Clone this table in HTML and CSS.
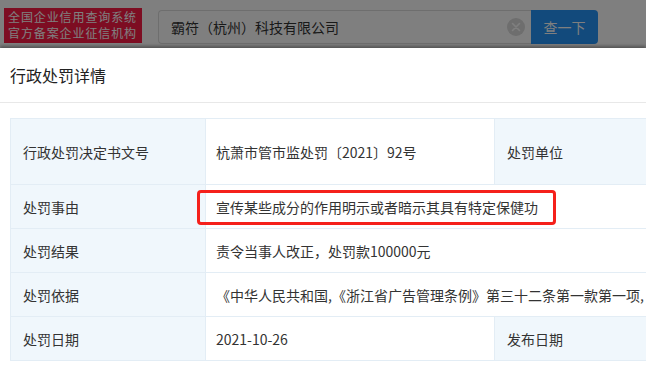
FILE: index.html
```html
<!DOCTYPE html>
<html lang="zh-CN">

<head>
    <meta charset="utf-8">
    <title>行政处罚详情</title>
    <link rel="stylesheet" href="styles.css">
</head>

<body>
    <div class="topbar">
        <div class="brand">
            <span>全国企业信用查询系统</span>
            <span>官方备案企业征信机构</span>
        </div>
        <div class="search">
            <div class="search-input">
                <span class="search-text">霸符（杭州）科技有限公司</span>
                <svg class="clear-icon" width="18" height="18" viewBox="0 0 18 18">
                    <circle cx="9" cy="9" r="9" fill="#dcdcdc"></circle>
                    <path d="M5.5 5.5 L12.5 12.5 M12.5 5.5 L5.5 12.5" stroke="#ffffff" stroke-width="1.6"
                        stroke-linecap="round"></path>
                </svg>
            </div>
            <button class="search-button">查一下</button>
        </div>
    </div>

    <div class="mask"></div>

    <div class="modal">
        <div class="modal-title">行政处罚详情</div>
        <div class="modal-body">
            <table class="detail">
                <colgroup>
                    <col class="col-label">
                    <col class="col-value">
                    <col class="col-label2">
                    <col class="col-value2">
                </colgroup>
                <tr>
                    <td class="label">行政处罚决定书文号</td>
                    <td>杭萧市管市监处罚〔2021〕92号</td>
                    <td class="label">处罚单位</td>
                    <td>杭州市萧山区市场监督管理局</td>
                </tr>
                <tr>
                    <td class="label">处罚事由</td>
                    <td colspan="3"><span class="mark">宣传某些成分的作用明示或者暗示其具有特定保健功</span></td>
                </tr>
                <tr>
                    <td class="label">处罚结果</td>
                    <td colspan="3">责令当事人改正，处罚款100000元</td>
                </tr>
                <tr>
                    <td class="label">处罚依据</td>
                    <td colspan="3" class="nowrap">《中华人民共和国,《浙江省广告管理条例》第三十二条第一款第一项, 《中华人民共和国广告法》第五十八条第一款第二项</td>
                </tr>
                <tr>
                    <td class="label">处罚日期</td>
                    <td>2021-10-26</td>
                    <td class="label">发布日期</td>
                    <td>2021-11-02</td>
                </tr>
            </table>
        </div>
    </div>
</body>

</html>
```

FILE: styles.css
```css
html,
body {
    margin: 0;
    height: 100%;
    overflow: hidden;
}

body {
    position: relative;
    font-family: "Noto Sans CJK SC", "Microsoft YaHei", sans-serif;
    color: #333333;
    background-color: #ffffff;
}

/* site header under the mask */
.topbar {
    height: 47px;
    display: flex;
    align-items: flex-start;
    gap: 16px;
    padding: 8px 0 0 4px;
    box-sizing: border-box;
    background-color: #ffffff;
}

.brand {
    width: 138px;
    height: 35px;
    box-sizing: border-box;
    padding: 1px 0 0 4px;
    display: flex;
    flex-direction: column;
    background-color: #fb1a45;
    color: #ffffff;
    font-size: 12px;
    line-height: 16px;
    letter-spacing: 0.9px;
    white-space: nowrap;
}

.search {
    display: flex;
    margin-top: 2px;
}

.search-input {
    width: 373px;
    height: 34px;
    box-sizing: border-box;
    display: flex;
    align-items: center;
    justify-content: space-between;
    padding: 0 6px 0 12px;
    border: 1px solid #dddddd;
    border-right: none;
    border-radius: 4px 0 0 4px;
    font-size: 14px;
    color: #333333;
}

.search-text {
    line-height: 20px;
}

.search-button {
    width: 67px;
    height: 34px;
    border: none;
    border-radius: 0 4px 4px 0;
    background-color: #2494f8;
    color: #ffffff;
    font-family: inherit;
    font-size: 14px;
    padding: 0;
}

.mask {
    position: absolute;
    inset: 0;
    background-color: rgba(0, 0, 0, 0.5);
}

/* detail dialog */
.modal {
    position: absolute;
    top: 48px;
    left: 0;
    right: 0;
    bottom: 0;
    overflow: hidden;
    background-color: #ffffff;
    box-shadow: 0 -2px 3px rgba(0, 0, 0, 0.35);
}

.modal-title {
    height: 55px;
    box-sizing: border-box;
    padding: 16px 10px 0;
    font-size: 16px;
    line-height: 22px;
    color: #222222;
    border-bottom: 1px solid #e8e8e8;
}

.modal-body {
    padding: 15px 0 0 10px;
}

.detail {
    width: 900px;
    table-layout: fixed;
    border-collapse: collapse;
    font-size: 14px;
    line-height: 22px;
}

.col-label {
    width: 195px;
}

.col-value {
    width: 289px;
}

.col-label2 {
    width: 250px;
}

.col-value2 {
    width: 166px;
}

.detail td {
    padding: 11px 10px 10px;
    border: 1px solid #e3edf5;
    vertical-align: middle;
}

.detail td.label {
    padding-left: 12px;
    background-color: #f0f7fc;
}

.nowrap {
    white-space: nowrap;
}

.mark {
    position: relative;
}

.mark::after {
    content: "";
    position: absolute;
    left: -19px;
    right: -18px;
    top: -7px;
    bottom: -8px;
    border: 3px solid #f5201b;
    border-radius: 4px;
}
```
